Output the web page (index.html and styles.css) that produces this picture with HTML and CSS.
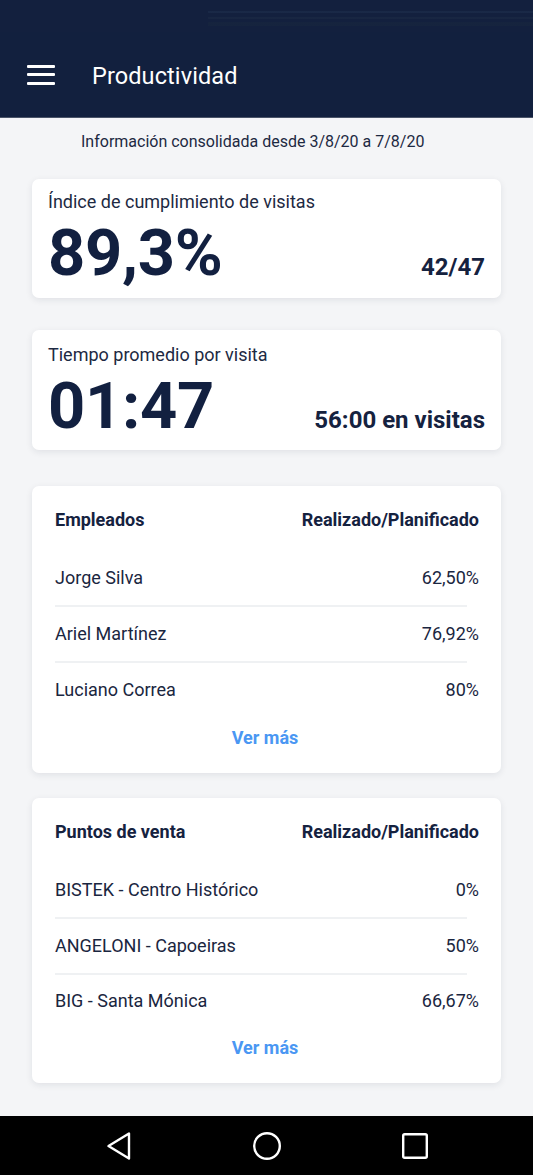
FILE: index.html
```html
<!DOCTYPE html>
<html lang="es">
<head>
<meta charset="utf-8">
<title>Productividad</title>
<link rel="stylesheet" href="styles.css">
</head>
<body>
<header class="appbar">
  <div class="status"></div>
  <div class="toolbar">
    <button class="menu" aria-label="Menú">
      <span></span><span></span><span></span>
    </button>
    <h1 class="title">Productividad</h1>
  </div>
</header>

<main class="content">
  <p class="period">Información consolidada desde 3/8/20 a 7/8/20</p>

  <section class="card stat stat-first">
    <div class="stat-label">Índice de cumplimiento de visitas</div>
    <div class="stat-row">
      <span class="stat-big">89,3%</span>
      <span class="stat-side">42/47</span>
    </div>
  </section>

  <section class="card stat stat-second">
    <div class="stat-label">Tiempo promedio por visita</div>
    <div class="stat-row">
      <span class="stat-big">01:47</span>
      <span class="stat-side">56:00 en visitas</span>
    </div>
  </section>

  <section class="card list list-first">
    <div class="list-head">
      <span>Empleados</span>
      <span>Realizado/Planificado</span>
    </div>
    <div class="list-row"><span>Jorge Silva</span><span>62,50%</span></div>
    <div class="divider"></div>
    <div class="list-row"><span>Ariel Martínez</span><span>76,92%</span></div>
    <div class="divider"></div>
    <div class="list-row"><span>Luciano Correa</span><span>80%</span></div>
    <a class="more" href="#">Ver más</a>
  </section>

  <section class="card list list-second">
    <div class="list-head">
      <span>Puntos de venta</span>
      <span>Realizado/Planificado</span>
    </div>
    <div class="list-row"><span>BISTEK - Centro Histórico</span><span>0%</span></div>
    <div class="divider"></div>
    <div class="list-row"><span>ANGELONI - Capoeiras</span><span>50%</span></div>
    <div class="divider"></div>
    <div class="list-row list-row-last"><span>BIG - Santa Mónica</span><span>66,67%</span></div>
    <a class="more" href="#">Ver más</a>
  </section>
</main>

<nav class="sysnav">
  <div class="navbtn">
    <svg width="26" height="30" viewBox="0 0 26 30"><path d="M23 2.5 L23 27.5 L2.5 15 Z" fill="none" stroke="#fff" stroke-width="2.4" stroke-linejoin="round"/></svg>
  </div>
  <div class="navbtn">
    <svg width="30" height="30" viewBox="0 0 30 30"><circle cx="15" cy="15" r="12.8" fill="none" stroke="#fff" stroke-width="2.4"/></svg>
  </div>
  <div class="navbtn">
    <svg width="28" height="28" viewBox="0 0 28 28"><rect x="2.2" y="2.2" width="23.6" height="23.6" rx="1.5" fill="none" stroke="#fff" stroke-width="2.4"/></svg>
  </div>
</nav>
</body>
</html>
```

FILE: styles.css
```css
* { box-sizing: border-box; }

html, body {
  margin: 0;
  padding: 0;
}

body {
  width: 533px;
  min-height: 1175px;
  background: #f4f5f7;
  font-family: Roboto, "Noto Sans", "Liberation Sans", sans-serif;
  color: #15223f;
  display: flex;
  flex-direction: column;
}

.appbar {
  background: #12203e;
  height: 118px;
  border-bottom: 1px solid #4a5468;
}

.status {
  height: 32px;
  background:
    linear-gradient(to bottom, transparent 0, transparent 11px, rgba(40,60,90,0.3) 11px, rgba(40,60,90,0.3) 13px, transparent 13px, transparent 17px, rgba(30,45,70,0.45) 17px, rgba(30,45,70,0.45) 19px, transparent 19px, transparent 22px, rgba(25,40,62,0.45) 22px, rgba(25,40,62,0.45) 26px, transparent 26px) 208px 0 / 325px 32px no-repeat,
    #13203e;
}

.toolbar {
  height: 85px;
  display: flex;
  align-items: center;
  padding-left: 27px;
}

.menu {
  width: 28px;
  height: 20px;
  padding: 0;
  margin: 0;
  border: 0;
  background: none;
  display: flex;
  flex-direction: column;
  justify-content: space-between;
}

.menu span {
  display: block;
  width: 28px;
  height: 3px;
  background: #ffffff;
  border-radius: 1px;
}

.title {
  margin: 2px 0 0 37px;
  font-size: 23.5px;
  font-weight: 400;
  color: #ffffff;
  letter-spacing: 0.1px;
}

.content {
  flex: 1;
  padding: 14px 32px 33px 32px;
}

.period {
  margin: 0;
  padding-left: 49px;
  font-size: 16px;
  line-height: 20px;
  color: #1d2942;
}

.card {
  background: #ffffff;
  border-radius: 7px;
  box-shadow: 0 2px 7px rgba(20, 30, 50, 0.09);
}

.stat {
  padding: 13px 16px 0 16px;
  height: 119px;
}

.stat-first { margin-top: 27px; }
.stat-second { margin-top: 32px; height: 120px; padding-top: 15px; }

.stat-label {
  font-size: 18px;
  line-height: 20px;
  color: #1d2942;
}

.stat-row {
  display: flex;
  justify-content: space-between;
  align-items: baseline;
  margin-top: 8px;
}

.stat-big {
  font-size: 65px;
  line-height: 66px;
  font-weight: 700;
  color: #122040;
  letter-spacing: -0.3px;
}

.stat-side {
  font-size: 24px;
  font-weight: 700;
  color: #15223f;
}

.list {
  padding: 24px 22px 25px 23px;
}

.list-first { margin-top: 36px; }
.list-second { margin-top: 25px; }

.list-head {
  display: flex;
  justify-content: space-between;
  font-size: 18px;
  line-height: 20px;
  font-weight: 700;
  color: #15223f;
  margin-bottom: 20px;
}

.list-row {
  display: flex;
  justify-content: space-between;
  font-size: 18px;
  line-height: 20px;
  padding: 17px 0 17px 0;
  color: #1a2640;
}

.list-head + .list-row { padding-top: 18px; }

.list-second .list-row-last { padding-top: 16px; }

.divider {
  height: 2px;
  background: #eff1f3;
  margin-right: 12px;
}

.more {
  display: block;
  text-align: center;
  margin-top: 11px;
  font-size: 18px;
  line-height: 20px;
  font-weight: 700;
  color: #4a97f3;
  text-decoration: none;
  padding-right: 4px;
}

.list-second .more { margin-top: 10px; }

.sysnav {
  height: 59px;
  background: #000000;
  display: flex;
  justify-content: center;
  align-items: center;
}

.navbtn {
  width: 148px;
  display: flex;
  justify-content: center;
  align-items: center;
}
```
